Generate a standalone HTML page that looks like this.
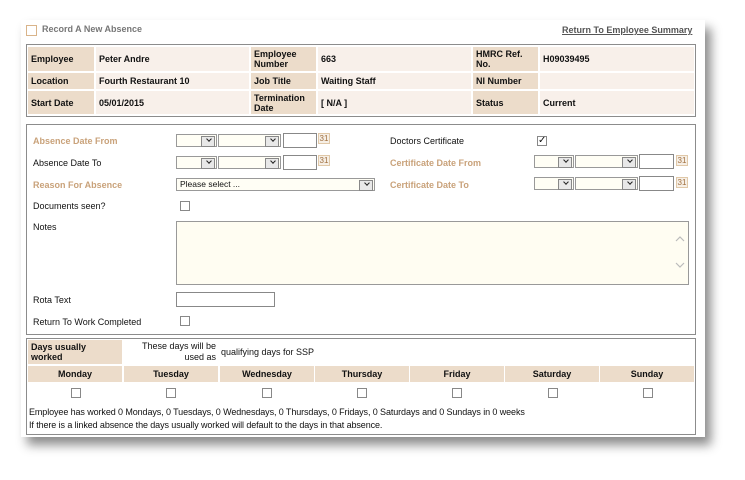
<!DOCTYPE html>
<html><head><style>
*{margin:0;padding:0;box-sizing:border-box}
body{width:745px;height:480px;background:#fff;font-family:"Liberation Sans",sans-serif;font-size:9px;color:#111;position:relative;overflow:hidden}
.a{position:absolute}
.panel{left:21px;top:20px;width:684px;height:417px;background:#fff;box-shadow:6px 8px 10px rgba(0,0,0,.45)}
.box{border:1px solid #8c8c8c}
.l{background:#ecdcca;font-weight:bold;padding-left:3px;display:flex;align-items:center;line-height:10px}
.v{background:#f8f0ea;font-weight:bold;padding-left:3px;display:flex;align-items:center}
.or{color:#c9a27a;font-weight:bold}
.sel{border:1px solid #999;background:#fffef5}
.sel:after{content:"";position:absolute;right:1px;top:1px;width:12px;height:9px;border:1px solid #888;background:#e8e8e8}
.sel:before{content:"";position:absolute;right:5px;top:2px;width:3px;height:3px;border-right:1.5px solid #222;border-bottom:1.5px solid #222;transform:rotate(45deg);z-index:2}
.inp{border:1px solid #888;background:#fff}
.cal{font-size:8px;color:#a07040;background:#f6efe6;border:1px solid #e0c8a8;width:12px;height:11px;line-height:10px;text-align:center}
.cb{width:10px;height:10px;border:1px solid #888;background:#fff}
.dh{background:#ecdcca;font-weight:bold;text-align:center;height:16px;line-height:16px;width:94px}
</style></head><body>
<div class="a panel"></div>
<div class="a" style="left:26px;top:25px;width:11px;height:11px;border:1px solid #d9b48a"></div>
<div class="a" style="left:42px;top:24px;font-weight:bold;color:#777">Record A New Absence</div>
<div class="a" style="left:562px;top:25px;font-weight:bold;color:#555;text-decoration:underline">Return To Employee Summary</div>

<div class="a box" style="left:26px;top:44px;width:670px;height:73px;border-width:1px"></div>
<div class="a l" style="left:28px;top:47px;width:66px;height:24px">Employee</div>
<div class="a v" style="left:96px;top:47px;width:153px;height:24px">Peter Andre</div>
<div class="a l" style="left:251px;top:47px;width:65px;height:24px">Employee<br>Number</div>
<div class="a v" style="left:318px;top:47px;width:153px;height:24px">663</div>
<div class="a l" style="left:473px;top:47px;width:65px;height:24px">HMRC Ref.<br>No.</div>
<div class="a v" style="left:540px;top:47px;width:154px;height:24px">H09039495</div>
<div class="a l" style="left:28px;top:73px;width:66px;height:16px">Location</div>
<div class="a v" style="left:96px;top:73px;width:153px;height:16px">Fourth Restaurant 10</div>
<div class="a l" style="left:251px;top:73px;width:65px;height:16px">Job Title</div>
<div class="a v" style="left:318px;top:73px;width:153px;height:16px">Waiting Staff</div>
<div class="a l" style="left:473px;top:73px;width:65px;height:16px">NI Number</div>
<div class="a v" style="left:540px;top:73px;width:154px;height:16px"></div>
<div class="a l" style="left:28px;top:91px;width:66px;height:23px">Start Date</div>
<div class="a v" style="left:96px;top:91px;width:153px;height:23px">05/01/2015</div>
<div class="a l" style="left:251px;top:91px;width:65px;height:23px">Termination<br>Date</div>
<div class="a v" style="left:318px;top:91px;width:153px;height:23px">[ N/A ]</div>
<div class="a l" style="left:473px;top:91px;width:65px;height:23px">Status</div>
<div class="a v" style="left:540px;top:91px;width:154px;height:23px">Current</div>

<div class="a box" style="left:26px;top:124px;width:670px;height:211px"></div>
<div class="a or" style="left:33px;top:136px">Absence Date From</div>
<div class="a" style="left:33px;top:158px">Absence Date To</div>
<div class="a or" style="left:33px;top:180px">Reason For Absence</div>
<div class="a" style="left:33px;top:201px">Documents seen?</div>
<div class="a" style="left:33px;top:222px">Notes</div>
<div class="a" style="left:33px;top:295px">Rota Text</div>
<div class="a" style="left:33px;top:317px">Return To Work Completed</div>
<div class="a" style="left:390px;top:136px">Doctors Certificate</div>
<div class="a or" style="left:390px;top:158px">Certificate Date From</div>
<div class="a or" style="left:390px;top:180px">Certificate Date To</div>

<div class="a sel" style="left:176px;top:134px;width:41px;height:13px"></div>
<div class="a sel" style="left:218px;top:134px;width:63px;height:13px"></div>
<div class="a inp" style="left:283px;top:133px;width:34px;height:15px"></div>
<div class="a cal" style="left:318px;top:133px">31</div>
<div class="a sel" style="left:176px;top:156px;width:41px;height:13px"></div>
<div class="a sel" style="left:218px;top:156px;width:63px;height:13px"></div>
<div class="a inp" style="left:283px;top:155px;width:34px;height:15px"></div>
<div class="a cal" style="left:318px;top:155px">31</div>
<div class="a sel" style="left:176px;top:178px;width:199px;height:13px;padding-left:3px;line-height:11px;font-size:8.5px">Please select ...</div>

<div class="a cb" style="left:537px;top:136px;font-size:10px;line-height:8px;text-align:center">✓</div>
<div class="a sel" style="left:534px;top:155px;width:40px;height:13px"></div>
<div class="a sel" style="left:575px;top:155px;width:63px;height:13px"></div>
<div class="a inp" style="left:639px;top:154px;width:35px;height:15px"></div>
<div class="a cal" style="left:676px;top:155px">31</div>
<div class="a sel" style="left:534px;top:177px;width:40px;height:13px"></div>
<div class="a sel" style="left:575px;top:177px;width:63px;height:13px"></div>
<div class="a inp" style="left:639px;top:176px;width:35px;height:15px"></div>
<div class="a cal" style="left:676px;top:177px">31</div>

<div class="a cb" style="left:180px;top:201px"></div>
<div class="a" style="left:176px;top:221px;width:513px;height:64px;border:1px solid #999;background:#fffdf2"></div>
<svg class="a" style="left:674px;top:234px" width="12" height="40"><path d="M2 7 L6 3 L10 7" fill="none" stroke="#bbb" stroke-width="1.2"/><path d="M2 29 L6 33 L10 29" fill="none" stroke="#bbb" stroke-width="1.2"/></svg>
<div class="a inp" style="left:176px;top:292px;width:99px;height:15px"></div>
<div class="a cb" style="left:180px;top:316px"></div>

<div class="a box" style="left:26px;top:338px;width:670px;height:97px"></div>
<div class="a l" style="left:28px;top:340px;width:94px;height:24px">Days usually<br>worked</div>
<div class="a" style="left:120px;top:341px;width:96px;text-align:right;line-height:11px">These days will be<br>used as</div>
<div class="a" style="left:221px;top:347px">qualifying days for SSP</div>
<div class="a dh" style="left:28px;top:366px">Monday</div>
<div class="a dh" style="left:124px;top:366px">Tuesday</div>
<div class="a dh" style="left:220px;top:366px">Wednesday</div>
<div class="a dh" style="left:315px;top:366px">Thursday</div>
<div class="a dh" style="left:410px;top:366px">Friday</div>
<div class="a dh" style="left:505px;top:366px">Saturday</div>
<div class="a dh" style="left:600px;top:366px">Sunday</div>
<div class="a cb" style="left:71px;top:388px"></div>
<div class="a cb" style="left:166px;top:388px"></div>
<div class="a cb" style="left:262px;top:388px"></div>
<div class="a cb" style="left:357px;top:388px"></div>
<div class="a cb" style="left:452px;top:388px"></div>
<div class="a cb" style="left:548px;top:388px"></div>
<div class="a cb" style="left:643px;top:388px"></div>
<div class="a" style="left:29px;top:407px;letter-spacing:-0.1px">Employee has worked 0 Mondays, 0 Tuesdays, 0 Wednesdays, 0 Thursdays, 0 Fridays, 0 Saturdays and 0 Sundays in 0 weeks</div>
<div class="a" style="left:29px;top:420px;letter-spacing:-0.1px">If there is a linked absence the days usually worked will default to the days in that absence.</div>
</body></html>
